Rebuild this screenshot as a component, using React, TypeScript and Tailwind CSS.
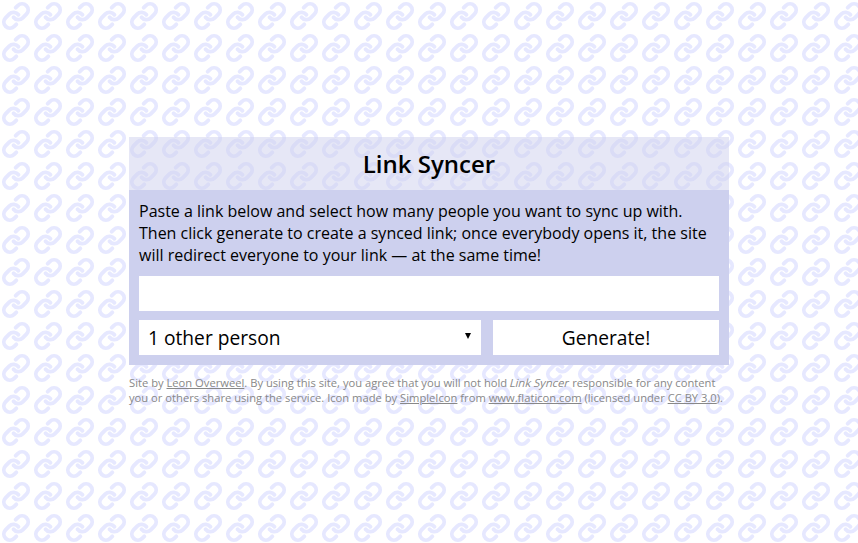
import React from "react";

function LinkPattern() {
  return (
    <svg className="absolute inset-0 h-full w-full" aria-hidden="true">
      <defs>
        <pattern id="links" width="32" height="32" patternUnits="userSpaceOnUse">
          <g transform="translate(1.36 1.36) scale(1.22)" fill="none" stroke="#e6e8ff" strokeWidth="3.2" strokeLinecap="round" strokeLinejoin="round">
            <path d="M10 13a5 5 0 0 0 7.54.54l3-3a5 5 0 0 0-7.07-7.07l-1.72 1.71" />
            <path d="M14 11a5 5 0 0 0-7.54-.54l-3 3a5 5 0 0 0 7.07 7.07l1.71-1.71" />
          </g>
        </pattern>
      </defs>
      <rect width="100%" height="100%" fill="url(#links)" />
    </svg>
  );
}

export default function App() {
  return (
    <div className="relative min-h-[543px] overflow-hidden bg-white font-['Open_Sans',sans-serif]">
      <LinkPattern />
      <div className="relative mx-auto w-[600px] pt-[137px]">
        <h1 className="flex h-[53px] items-center justify-center bg-[#cdd0ee]/50 text-2xl font-semibold text-black">
          Link Syncer
        </h1>
        <div className="flex flex-col gap-[9px] bg-[#cdd0ee] p-2.5">
          <p className="mb-px text-base leading-[22px] text-black">
            Paste a link below and select how many people you want to sync up with.
            Then click generate to create a synced link; once everybody opens it, the site
            will redirect everyone to your link — at the same time!
          </p>
          <input type="text" className="h-[35px] w-full bg-white px-2.5 text-[19.2px] outline-none" />
          <div className="flex gap-3">
            <div className="relative h-[35px] w-[342px] bg-white">
              <div className="px-[9px] text-[19.2px] leading-[35px] text-black">1 other person</div>
              <span className="absolute top-[13px] right-[10px] h-0 w-0 border-x-[3px] border-t-[6px] border-x-transparent border-t-black" />
            </div>
            <button className="h-[35px] flex-1 bg-white pt-px text-[19.2px] text-black">Generate!</button>
          </div>
        </div>
        <p className="mt-2.5 text-[11.2px] leading-[15px] text-[#888888]">
          Site by <a className="underline">Leon Overweel</a>. By using this site, you agree that you will not hold{" "}
          <span className="inline-block -skew-x-[14deg]">Link Syncer</span> responsible for any content you or others share using the service. Icon made by{" "}
          <a className="underline">SimpleIcon</a> from <a className="underline">www.flaticon.com</a> (licensed under{" "}
          <a className="underline">CC BY 3.0</a>).
        </p>
      </div>
    </div>
  );
}
